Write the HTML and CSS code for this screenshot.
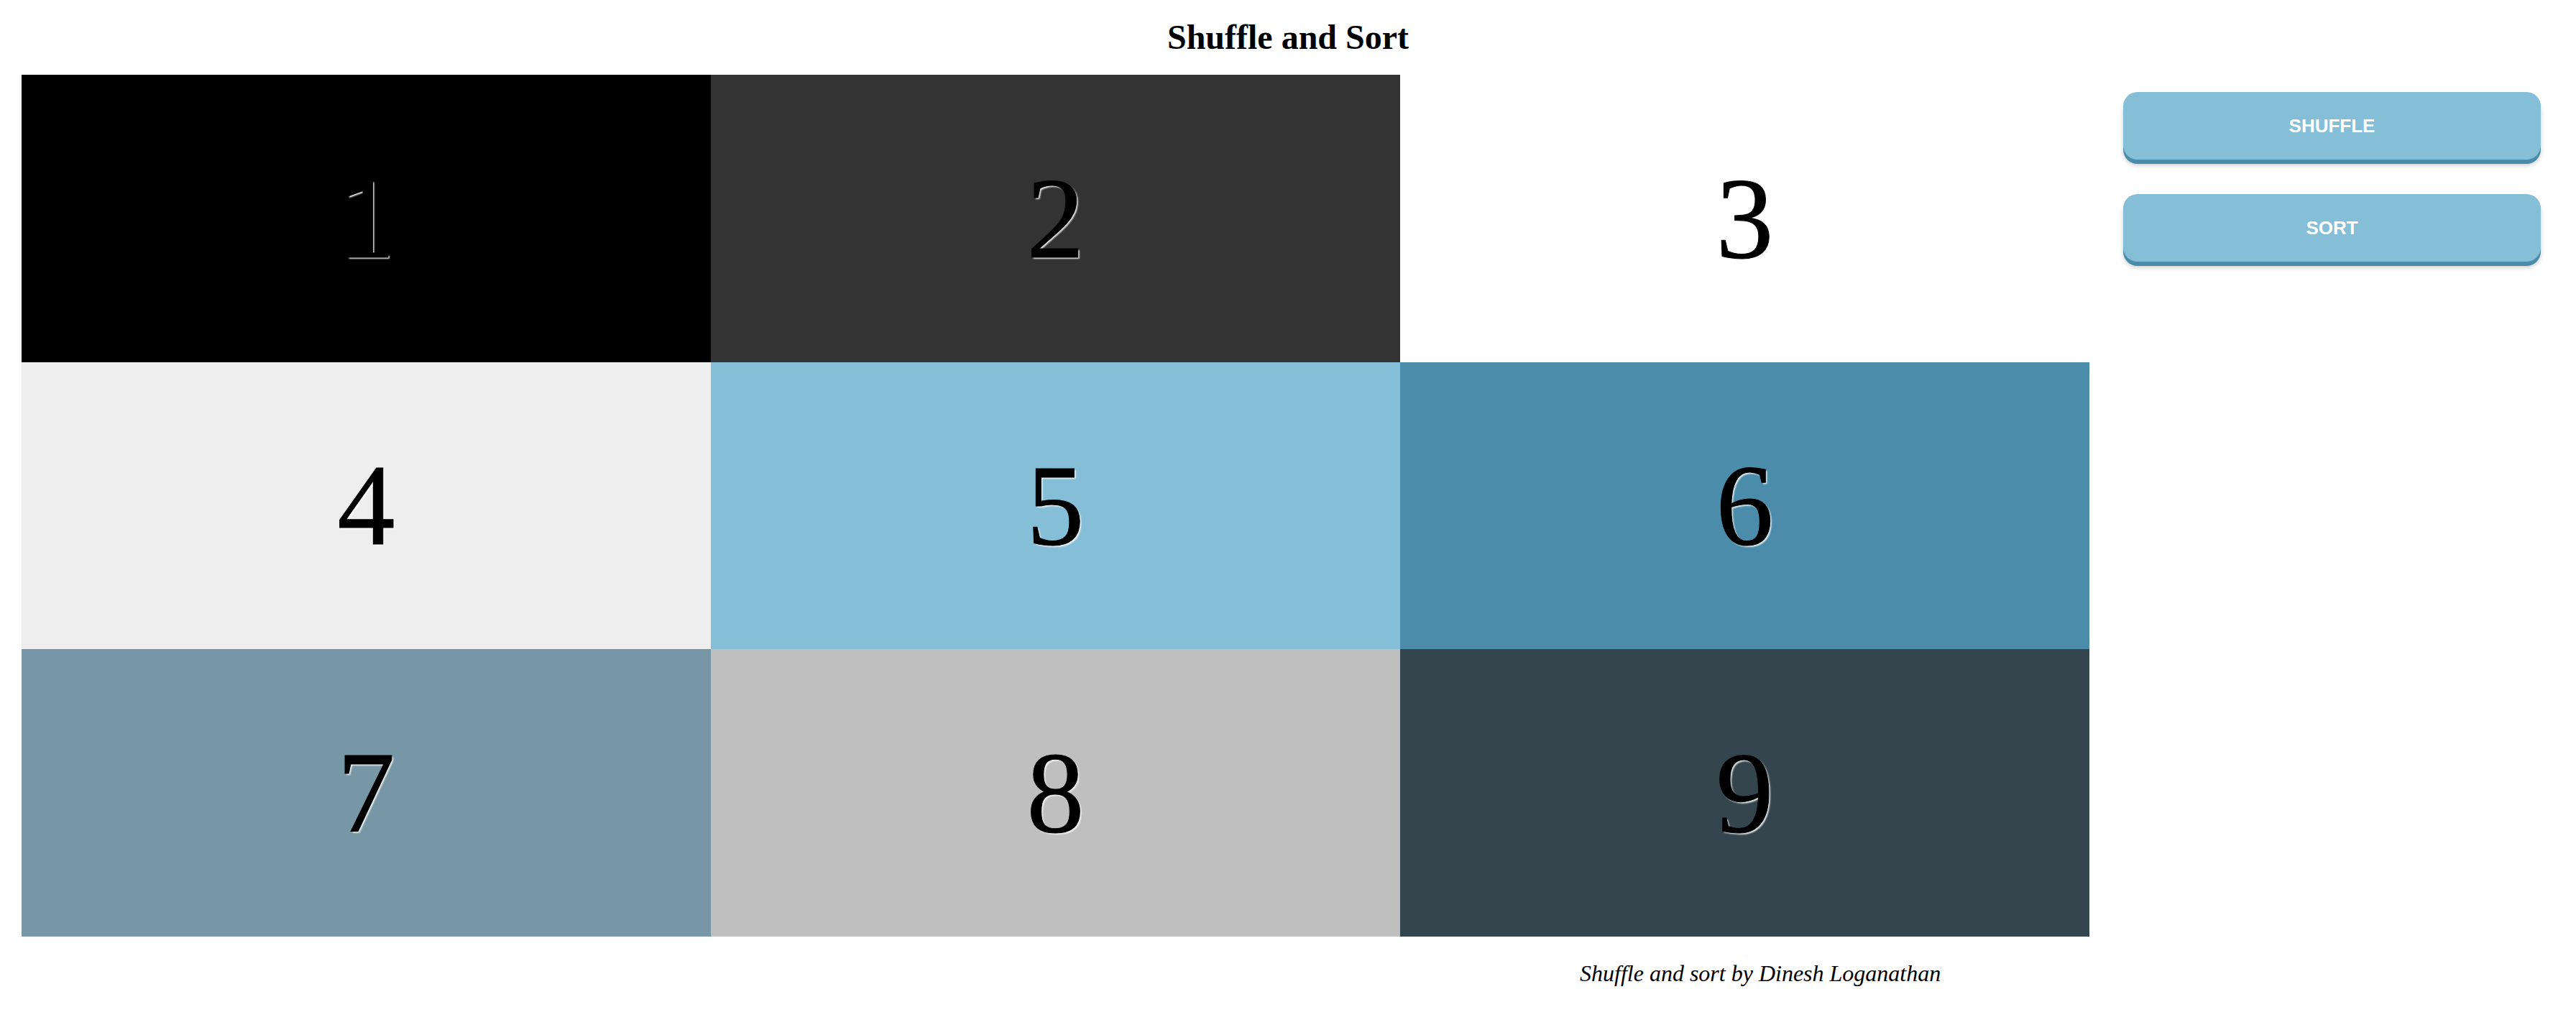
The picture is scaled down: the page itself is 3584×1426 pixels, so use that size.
FILE: index.html
```html
<!DOCTYPE html>
<html lang="en">
<head>
    <meta charset="UTF-8">
    <meta name="viewport" content="width=device-width, initial-scale=1.0">
    <title>Shuffle and Sort</title>
    <link rel="stylesheet" href="styles.css">
</head>
<body>
    <h2 class="title">Shuffle and Sort</h2>
    <div class="main">
        <div class="cards" id="cards">
            <div class="card c1">1</div>
            <div class="card c2">2</div>
            <div class="card c3">3</div>
            <div class="card c4">4</div>
            <div class="card c5">5</div>
            <div class="card c6">6</div>
            <div class="card c7">7</div>
            <div class="card c8">8</div>
            <div class="card c9">9</div>
        </div>
        <div class="actions">
            <button class="btn" id="shuffleBtn">Shuffle</button>
            <button class="btn" id="sortBtn">Sort</button>
        </div>
    </div>
    <p class="credit">Shuffle and sort by Dinesh Loganathan</p>
    <script>
        const cards = document.getElementById('cards');

        document.getElementById('shuffleBtn').addEventListener('click', function() {
            const items = Array.from(cards.children);
            for (let i = items.length - 1; i > 0; i--) {
                const j = Math.floor(Math.random() * (i + 1));
                [items[i], items[j]] = [items[j], items[i]];
            }
            items.forEach(item => cards.appendChild(item));
        });

        document.getElementById('sortBtn').addEventListener('click', function() {
            const items = Array.from(cards.children);
            items.sort((a, b) => parseInt(a.textContent) - parseInt(b.textContent));
            items.forEach(item => cards.appendChild(item));
        });
    </script>
</body>
</html>
```

FILE: styles.css
```css
body {
    margin: 0;
    padding: 24px 49px 0 30px;
    font-family: "Liberation Serif", "Times New Roman", serif;
    background-color: #fff;
    color: #000;
}
.title {
    margin: 0 -49px 24px -30px;
    font-size: 48px;
    line-height: 56px;
    font-weight: bold;
    text-align: center;
}
.main {
    display: flex;
    align-items: flex-start;
    gap: 47px;
}
.cards {
    display: grid;
    grid-template-columns: repeat(3, 959px);
    grid-template-rows: repeat(3, 1fr);
    height: 1199px;
}
.card {
    display: flex;
    align-items: center;
    justify-content: center;
    font-size: 160px;
    line-height: 1;
    color: #000;
    -webkit-text-stroke: 1px #000;
    text-shadow: 2px 2px 2px rgba(255,255,255,0.9);
}
.c1 { background: #000; }
.c2 { background: #333; }
.c3 { background: #fff; }
.c4 { background: #eee; }
.c5 { background: #85bed7; }
.c6 { background: #4a8caa; }
.c7 { background: #7797a6; }
.c8 { background: #bfbfbf; }
.c9 { background: #34454e; }
.actions {
    display: flex;
    flex-direction: column;
    gap: 48px;
    padding-top: 24px;
    width: 581px;
}
.btn {
    height: 94px;
    border: none;
    border-radius: 20px;
    background: #85bed7;
    color: #fff;
    font-family: "Liberation Sans", Arial, sans-serif;
    font-weight: bold;
    font-size: 26px;
    text-transform: uppercase;
    cursor: pointer;
    box-shadow: 0 6px 0 #4a8caa, 0 8px 6px rgba(0,0,0,0.2);
}
.btn:hover {
    background: #7ab4ce;
}
.credit {
    margin: 33px 0 0 2168px;
    font-size: 32px;
    font-style: italic;
}
```
